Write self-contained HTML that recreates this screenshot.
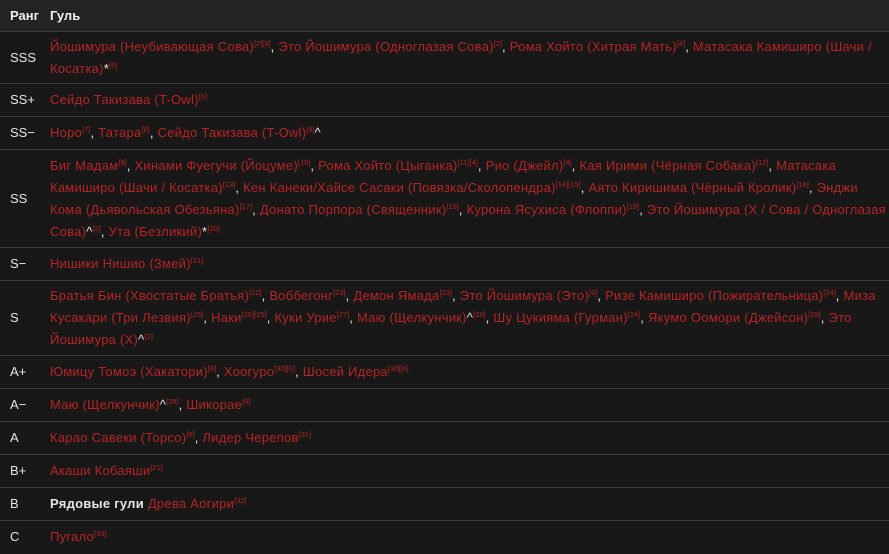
<!DOCTYPE html>
<html><head><meta charset="utf-8"><style>
body{margin:0;background:#181818;width:889px;height:554px;overflow:hidden;font-family:"Liberation Sans","DejaVu Sans",sans-serif;font-size:13px;color:#e6e6e6}
table{border-collapse:collapse;width:889px}
th{background:#232323;text-align:left;font-weight:bold;height:31px;padding:0 0 0 10px;color:#f0f0f0}
td{border-top:1px solid #3c3c3c;padding:0 0 0 10px;line-height:22px;vertical-align:middle;white-space:nowrap}
td.r{width:40px}
td:nth-child(2){padding-left:0;letter-spacing:0.25px}
a{color:#b82424;text-decoration:none}
sup{font-size:7.5px;color:#b82424;vertical-align:5px;line-height:0;letter-spacing:0}
</style></head><body>
<table>
<tr><th style="width:40px">Ранг</th><th style="padding:0">Гуль</th></tr>
<tr style="height:52px"><td class="r">SSS</td><td><a>Йошимура (Неубивающая Сова)</a><sup>[2][3]</sup>, <a>Это Йошимура (Одноглазая Сова)</a><sup>[2]</sup>, <a>Рома Хойто (Хитрая Мать)</a><sup>[4]</sup>, <a>Матасака Камиширо (Шачи /</a><br><a>Косатка)</a>*<sup>[5]</sup></td></tr>
<tr style="height:33px"><td class="r">SS+</td><td><a>Сейдо Такизава (T-Owl)</a><sup>[6]</sup></td></tr>
<tr style="height:33px"><td class="r">SS−</td><td><a>Норо</a><sup>[7]</sup>, <a>Татара</a><sup>[6]</sup>, <a>Сейдо Такизава (T-Owl)</a><sup>[8]</sup>^</td></tr>
<tr style="height:98px"><td class="r">SS</td><td><a>Биг Мадам</a><sup>[9]</sup>, <a>Хинами Фуегучи (Йоцуме)</a><sup>[10]</sup>, <a>Рома Хойто (Цыганка)</a><sup>[11][4]</sup>, <a>Рио (Джейл)</a><sup>[4]</sup>, <a>Кая Ирими (Чёрная Собака)</a><sup>[12]</sup>, <a>Матасака</a><br><a>Камиширо (Шачи / Косатка)</a><sup>[13]</sup>, <a>Кен Канеки/Хайсе Сасаки (Повязка/Сколопендра)</a><sup>[14][15]</sup>, <a>Аято Киришима (Чёрный Кролик)</a><sup>[16]</sup>, <a>Энджи</a><br><a>Кома (Дьявольская Обезьяна)</a><sup>[17]</sup>, <a>Донато Порпора (Священник)</a><sup>[18]</sup>, <a>Курона Ясухиса (Флоппи)</a><sup>[19]</sup>, <a>Это Йошимура (X / Сова / Одноглазая</a><br><a>Сова)</a>^<sup>[2]</sup>, <a>Ута (Безликий)</a>*<sup>[20]</sup></td></tr>
<tr style="height:33px"><td class="r">S−</td><td><a>Нишики Нишио (Змей)</a><sup>[21]</sup></td></tr>
<tr style="height:75px"><td class="r">S</td><td><a>Братья Бин (Хвостатые Братья)</a><sup>[22]</sup>, <a>Воббегонг</a><sup>[23]</sup>, <a>Демон Ямада</a><sup>[23]</sup>, <a>Это Йошимура (Это)</a><sup>[6]</sup>, <a>Ризе Камиширо (Пожирательница)</a><sup>[24]</sup>, <a>Миза</a><br><a>Кусакари (Три Лезвия)</a><sup>[25]</sup>, <a>Наки</a><sup>[26][25]</sup>, <a>Куки Урие</a><sup>[27]</sup>, <a>Маю (Щелкунчик)</a>^<sup>[28]</sup>, <a>Шу Цукияма (Гурман)</a><sup>[24]</sup>, <a>Якумо Оомори (Джейсон)</a><sup>[29]</sup>, <a>Это</a><br><a>Йошимура (X)</a>^<sup>[2]</sup></td></tr>
<tr style="height:33px"><td class="r">A+</td><td><a>Юмицу Томоэ (Хакатори)</a><sup>[6]</sup>, <a>Хоогуро</a><sup>[30][6]</sup>, <a>Шосей Идера</a><sup>[30][6]</sup></td></tr>
<tr style="height:33px"><td class="r">A−</td><td><a>Маю (Щелкунчик)</a>^<sup>[28]</sup>, <a>Шикорае</a><sup>[6]</sup></td></tr>
<tr style="height:33px"><td class="r">A</td><td><a>Карао Савеки (Торсо)</a><sup>[6]</sup>, <a>Лидер Черепов</a><sup>[31]</sup></td></tr>
<tr style="height:33px"><td class="r">B+</td><td><a>Акаши Кобаяши</a><sup>[21]</sup></td></tr>
<tr style="height:33px"><td class="r">B</td><td><b>Рядовые гули</b> <a>Древа Аогири</a><sup>[32]</sup></td></tr>
<tr style="height:33px"><td class="r">C</td><td><a>Пугало</a><sup>[33]</sup></td></tr>
</table>
</body></html>
